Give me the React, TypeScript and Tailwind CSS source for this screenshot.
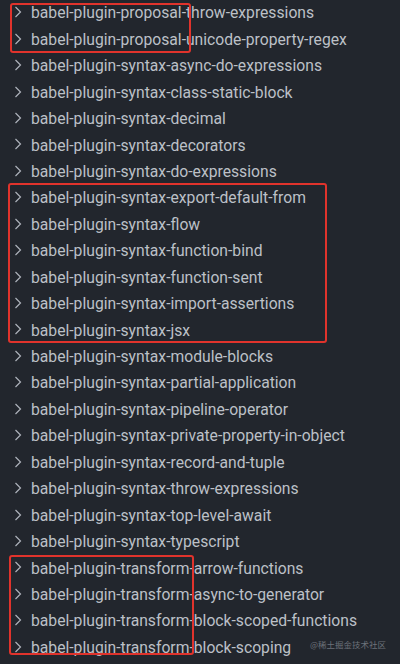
import React from "react";

const items = [
  "babel-plugin-proposal-throw-expressions",
  "babel-plugin-proposal-unicode-property-regex",
  "babel-plugin-syntax-async-do-expressions",
  "babel-plugin-syntax-class-static-block",
  "babel-plugin-syntax-decimal",
  "babel-plugin-syntax-decorators",
  "babel-plugin-syntax-do-expressions",
  "babel-plugin-syntax-export-default-from",
  "babel-plugin-syntax-flow",
  "babel-plugin-syntax-function-bind",
  "babel-plugin-syntax-function-sent",
  "babel-plugin-syntax-import-assertions",
  "babel-plugin-syntax-jsx",
  "babel-plugin-syntax-module-blocks",
  "babel-plugin-syntax-partial-application",
  "babel-plugin-syntax-pipeline-operator",
  "babel-plugin-syntax-private-property-in-object",
  "babel-plugin-syntax-record-and-tuple",
  "babel-plugin-syntax-throw-expressions",
  "babel-plugin-syntax-top-level-await",
  "babel-plugin-syntax-typescript",
  "babel-plugin-transform-arrow-functions",
  "babel-plugin-transform-async-to-generator",
  "babel-plugin-transform-block-scoped-functions",
  "babel-plugin-transform-block-scoping",
];

function Chevron() {
  return (
    <svg width="8" height="12" viewBox="0 0 8 12" className="shrink-0 mb-[2px]">
      <path d="M1.5 1 L6.5 6 L1.5 11" fill="none" stroke="#aeb3bb" strokeWidth="1.2" />
    </svg>
  );
}

export default function App() {
  return (
    <div
      className="relative w-[400px] h-[664px] overflow-hidden bg-[#22262d]"
      style={{ fontFamily: 'Roboto, "Noto Sans", sans-serif' }}
    >
      <div className="flex flex-col">
        {items.map((t) => (
          <div key={t} className="flex items-center h-[26.45px] pl-[14px] gap-[9px]">
            <Chevron />
            <span className="text-[15.7px] leading-none text-[#bcc0c7] whitespace-nowrap">{t}</span>
          </div>
        ))}
      </div>
      <div className="absolute left-[10px] top-[3px] w-[181px] h-[50px] border-2 border-[#e0332c] rounded-[3px]" />
      <div className="absolute left-[8px] top-[183px] w-[319px] h-[160px] border-2 border-[#e0332c] rounded-[3px]" />
      <div className="absolute left-[9px] top-[555px] w-[185px] h-[100px] border-2 border-[#e0332c] rounded-[3px]" />
      <div
        className="absolute left-[310px] top-[640px] text-[8.5px] leading-none text-[#6d727a] whitespace-nowrap"
        style={{ fontFamily: '"Noto Sans CJK SC", sans-serif' }}
      >
        @稀土掘金技术社区
      </div>
    </div>
  );
}
